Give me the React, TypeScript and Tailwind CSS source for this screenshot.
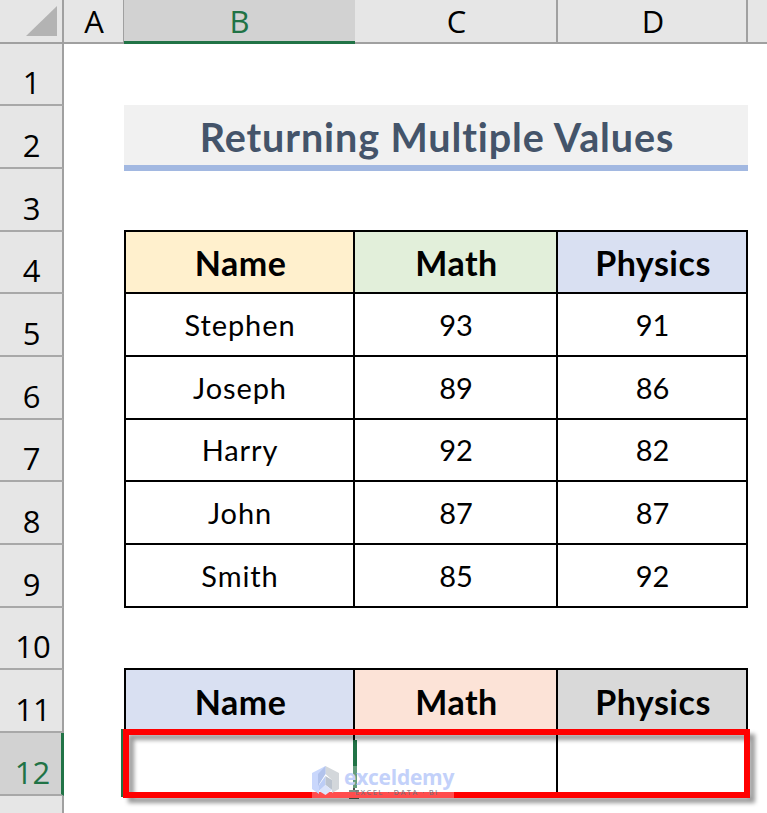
import React from 'react'
import clsx from 'clsx'

interface GridRow {
  kind: 'blank' | 'title' | 'head' | 'body' | 'selected'
  cells?: string[]
  fills?: string[]
}

const rows: GridRow[] = [
  { kind: 'blank' },
  { kind: 'title', cells: ['Returning Multiple Values'] },
  { kind: 'blank' },
  { kind: 'head', cells: ['Name', 'Math', 'Physics'], fills: ['bg-[#fff0cd]', 'bg-[#e2efda]', 'bg-[#d9e0f2]'] },
  { kind: 'body', cells: ['Stephen', '93', '91'] },
  { kind: 'body', cells: ['Joseph', '89', '86'] },
  { kind: 'body', cells: ['Harry', '92', '82'] },
  { kind: 'body', cells: ['John', '87', '87'] },
  { kind: 'body', cells: ['Smith', '85', '92'] },
  { kind: 'blank' },
  { kind: 'head', cells: ['Name', 'Math', 'Physics'], fills: ['bg-[#d9e0f2]', 'bg-[#fce3d7]', 'bg-[#d9d9d9]'] },
  { kind: 'selected', cells: ['', '', ''] },
]

const columnWidths = ['w-[229px]', 'w-[203px]', 'w-[190px]']

function ColumnHeader() {
  return (
    <div className="flex h-[43.5px] bg-[#e6e6e6] text-[31px] leading-[42px] text-black">
      <div className="flex w-[64px] items-start justify-end border-r-2 border-b-2 border-[#a0a0a0] pt-[6px] pr-[5px]">
        <svg width="31" height="31" viewBox="0 0 31 31">
          <path d="M31 0V30H0Z" fill="#b3b3b3" />
        </svg>
      </div>
      <div className="w-[60px] border-r border-b-2 border-[#a0a0a0] pl-px text-center">A</div>
      <div className="w-[231px] border-b-[3px] border-[#217346] bg-[#d2d2d2] text-center text-[#217346]">B</div>
      <div className="w-[203px] border-r-2 border-b-2 border-[#a0a0a0] pl-[2px] text-center">C</div>
      <div className="w-[190px] border-r-2 border-b-2 border-[#a0a0a0] pl-[2px] text-center">D</div>
      <div className="flex-1 border-b-2 border-[#a0a0a0]" />
    </div>
  )
}

function RowCells({ row }: { row: GridRow }) {
  if (row.kind === 'blank') return null

  if (row.kind === 'title') {
    return (
      <div className="-mt-px -mb-[2px] flex w-[624px] items-center justify-center border-b-[6px] border-[#a2b8e1] bg-[#f1f1f1] pt-[4px] pl-[2px] font-[Lato,sans-serif] text-[39.5px] leading-none font-bold tracking-[0.9px] text-[#44546a]">
        {row.cells?.[0]}
      </div>
    )
  }

  return (
    <div
      className={clsx(
        '-mt-[2px] flex border-l-2 border-black font-[Lato,sans-serif] leading-none',
        row.kind === 'head' ? 'text-[34px] font-bold tracking-[0.5px]' : 'text-[29px]',
      )}
    >
      {row.cells?.map((cell, i) => (
        <div
          key={i}
          className={clsx(
            'flex items-center justify-center border-t-2 border-r-2 border-b-2 border-black',
            row.kind === 'head' ? 'pt-[3px] pl-[2px]' : 'pl-px',
            columnWidths[i],
            i === 0 && row.kind === 'body' && 'tracking-[0.9px]',
            row.fills?.[i],
          )}
        >
          {cell}
        </div>
      ))}
    </div>
  )
}

function Watermark() {
  return (
    <div className="absolute top-[766px] left-[312px] flex h-[32px] w-[142px] bg-white/30">
      <svg width="28" height="30" viewBox="0 0 28 30" className="shrink-0">
        <path d="M13.500 0 0 7v16l7 5V14l6.500-6Z" fill="#c9d7fc" />
        <path d="M13.500 0 27 7v16l-7 4V14l-6.500-6Z" fill="#d3d7db" />
        <path d="M13.500 0v8L6 20V8Z" fill="#b2c3ec" />
        <path d="m7 19 6.500-9v9L7 25Z" fill="#bccdf6" />
        <path d="m13.500 10 6.500 4v10l-6.500-5Z" fill="#bcc4cf" />
        <path d="m7 25 6.500-6 6.500 5-6.500 5Z" fill="#dbe4fb" />
      </svg>
      <div className="pl-[4px] font-['Open_Sans',sans-serif] whitespace-nowrap">
        <div className="text-[21px] leading-[23px] font-bold tracking-[-0.25px] text-[#c3d1fa]">exceldemy</div>
        <div className="-mt-px pl-[11px] text-[7.5px] leading-[8px] font-semibold tracking-[1.35px] text-[#706d76]/80">EXCEL · DATA · BI</div>
      </div>
    </div>
  )
}

export default function App() {
  return (
    <div className="relative h-[813px] w-[767px] overflow-hidden bg-white font-['Open_Sans',sans-serif]">
      <ColumnHeader />
      {rows.map((row, i) => (
        <div key={i} className="flex h-[62.7px]">
          <div
            className={clsx(
              'mr-[60px] flex w-[64px] shrink-0 items-end justify-center border-b-2 border-b-[#a8a8a8] text-[31px] leading-[44px]',
              i < 9 ? 'pl-px' : 'pl-[4px]',
              row.kind === 'selected'
                ? 'border-r-[3px] border-r-[#217346] bg-[#d2d2d2] text-[#217346]'
                : 'border-r-2 border-r-[#a0a0a0] bg-[#e6e6e6] text-black',
            )}
          >
            {i + 1}
          </div>
          <RowCells row={row} />
        </div>
      ))}
      <div className="h-[18px] w-[64px] border-r-2 border-[#a0a0a0] bg-[#e6e6e6]" />

      {/* Active cell edges around B12 */}
      <div className="absolute top-[729px] left-[121px] h-[68px] w-[3px] bg-[#217346]" />
      <div className="absolute top-[740px] left-[353px] h-[48px] w-[4px] bg-[#217346]" />
      <div className="absolute top-[790px] left-[349px] h-[9px] w-[10px] bg-[#4c6657]" />

      {/* Highlighted range */}
      <div className="absolute top-[729px] left-[123px] h-[69px] w-[627px] border-[6px] border-[#ff0000] drop-shadow-[5px_5px_2px_rgba(0,0,0,0.4)]" />
      <Watermark />
    </div>
  )
}
